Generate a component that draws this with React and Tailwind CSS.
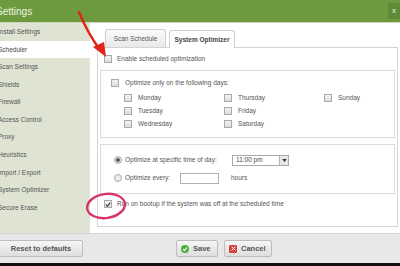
import React from "react";

const navItems = [
  "Install Settings",
  "Scheduler",
  "Scan Settings",
  "Shields",
  "Firewall",
  "Access Control",
  "Proxy",
  "Heuristics",
  "Import / Export",
  "System Optimizer",
  "Secure Erase",
];

function Box({ checked }) {
  return (
    <span className="w-[8px] h-[8px] shrink-0 border border-[#a9a9a9] bg-gradient-to-b from-[#f4f4f4] to-[#dcdcdc] flex items-center justify-center">
      {checked && (
        <svg viewBox="0 0 8 8" className="w-[7px] h-[7px]">
          <path d="M1.2 4.2 L3.2 6.2 L7 1.5" fill="none" stroke="#333" strokeWidth="1.4" />
        </svg>
      )}
    </span>
  );
}

function Radio({ on }) {
  return (
    <span className="w-[8px] h-[8px] shrink-0 rounded-full border border-[#a9a9a9] bg-[#ececec] flex items-center justify-center">
      {on && <span className="w-[4px] h-[4px] rounded-full bg-[#555]" />}
    </span>
  );
}

function Day({ label }) {
  return (
    <div className="h-[13px] flex items-center gap-[6px]">
      <Box />
      <span>{label}</span>
    </div>
  );
}

export default function App() {
  return (
    <div
      className="relative w-[400px] h-[266px] overflow-hidden bg-white text-[6.5px] text-[#555]"
      style={{ fontFamily: '"Liberation Sans", Arial, sans-serif' }}
    >
      {/* title bar */}
      <div className="h-[22px] bg-[#6d9a3f] flex items-center justify-between">
        <span className="ml-[-4px] text-[10px] text-[#eef4e4]">Settings</span>
        <span className="w-[12px] h-[16px] bg-[#5f8a36] text-[#eef4e4] text-[8px] flex items-center justify-center">
          x
        </span>
      </div>
      <div className="h-[1px] bg-[#cbd6bd]" />

      <div className="flex h-[210px]">
        {/* sidebar */}
        <div className="w-[90px] bg-[#dee3d2] flex flex-col">
          {navItems.map((item, i) => (
            <div
              key={item}
              className={
                "h-[17.6px] flex items-center pl-[-1px] " +
                (i === 1 ? "bg-white text-[#444]" : "text-[#555]")
              }
            >
              <span className="ml-[-2px]">{item}</span>
            </div>
          ))}
        </div>

        {/* content */}
        <div className="flex-1 pl-[7px] pr-[2px] flex flex-col">
          <div className="h-[24px] flex items-end pl-[8px] gap-[3px]">
            <div className="h-[18px] w-[61px] border border-b-0 border-[#cfcfcf] rounded-t-[3px] bg-gradient-to-b from-[#fafafa] to-[#e9e9e9] flex items-center justify-center">
              Scan Schedule
            </div>
            <div className="h-[18px] w-[66px] border border-b-0 border-[#cfcfcf] rounded-t-[3px] bg-white font-bold text-[#444] flex items-center justify-center mb-[-1px] relative">
              System Optimizer
            </div>
          </div>

          <div className="h-[180px] border border-[#d3d3d3] flex flex-col">
            <div className="h-[10px] mt-[6px] pl-[6px] flex items-center gap-[5px]">
              <Box />
              <span>Enable scheduled optimization</span>
            </div>

            <div className="mx-[2px] mt-[6px] h-[68px] border border-[#dadada] flex flex-col">
              <div className="h-[10px] mt-[7px] pl-[10px] flex items-center gap-[6px]">
                <Box />
                <span>Optimize only on the following days:</span>
              </div>
              <div className="grid grid-cols-[100px_100px_1fr] pl-[23px] mt-[3px]">
                <div className="flex flex-col">
                  <Day label="Monday" />
                  <Day label="Tuesday" />
                  <Day label="Wednesday" />
                </div>
                <div className="flex flex-col">
                  <Day label="Thursday" />
                  <Day label="Friday" />
                  <Day label="Saturday" />
                </div>
                <div className="flex flex-col">
                  <Day label="Sunday" />
                </div>
              </div>
            </div>

            <div className="mx-[2px] mt-[6px] h-[50px] border border-[#dadada] flex flex-col">
              <div className="h-[12px] mt-[9px] pl-[13px] flex items-center gap-[3px]">
                <Radio on />
                <span className="w-[104px]">Optimize at specific time of day:</span>
                <div className="w-[57px] h-[11px] border border-[#a9a9a9] bg-white flex items-center justify-between pl-[3px] text-[#444]">
                  <span>11:00 pm</span>
                  <span className="w-[9px] h-full border-l border-[#b5b5b5] bg-[#e6e6e6] flex items-center justify-center">
                    <svg viewBox="0 0 6 4" className="w-[5px] h-[3px]">
                      <path d="M0 0 L6 0 L3 4 Z" fill="#333" />
                    </svg>
                  </span>
                </div>
              </div>
              <div className="h-[12px] mt-[6px] pl-[13px] flex items-center gap-[3px]">
                <Radio />
                <span className="w-[52px]">Optimize every:</span>
                <div className="w-[39px] h-[11px] border border-[#b0b0b0] bg-white" />
                <span className="ml-[9px]">hours</span>
              </div>
            </div>

            <div className="h-[10px] mt-[5px] pl-[6px] flex items-center gap-[5px]">
              <Box checked />
              <span>Run on bootup if the system was off at the scheduled time</span>
            </div>
          </div>
        </div>
      </div>

      {/* bottom bar */}
      <div className="h-[30px] bg-[#e8e8e8] border-t border-[#d6d6d6] flex items-center">
        <div className="w-[84px] h-[17px] ml-[-1px] border border-[#bdbdbd] rounded-[2px] bg-gradient-to-b from-[#f6f6f6] to-[#dedede] flex items-center justify-center font-bold text-[7.5px] text-[#555]">
          Reset to defaults
        </div>
        <div className="ml-[93px] w-[42px] h-[17px] border border-[#bdbdbd] rounded-[2px] bg-gradient-to-b from-[#f6f6f6] to-[#dedede] flex items-center gap-[4px] pl-[4px] font-bold text-[7.5px] text-[#555]">
          <span className="w-[8px] h-[8px] rounded-full bg-[#4caf3c] flex items-center justify-center">
            <svg viewBox="0 0 8 8" className="w-[6px] h-[6px]">
              <path d="M1.5 4.2 L3.3 6 L6.7 2" fill="none" stroke="#fff" strokeWidth="1.5" />
            </svg>
          </span>
          Save
        </div>
        <div className="ml-[6px] w-[48px] h-[17px] border border-[#bdbdbd] rounded-[2px] bg-gradient-to-b from-[#f6f6f6] to-[#dedede] flex items-center gap-[4px] pl-[4px] font-bold text-[7.5px] text-[#555]">
          <span className="w-[8px] h-[8px] rounded-[1px] bg-[#d9423a] flex items-center justify-center">
            <svg viewBox="0 0 8 8" className="w-[5px] h-[5px]">
              <path d="M1 1 L7 7 M7 1 L1 7" stroke="#fff" strokeWidth="1.6" />
            </svg>
          </span>
          Cancel
        </div>
      </div>
      <div className="h-[4px] bg-[#111]" />

      {/* annotations */}
      <svg className="absolute inset-0 pointer-events-none" width="400" height="266" viewBox="0 0 400 266">
        <path d="M79 12 Q87 32 100 50" fill="none" stroke="#e0231b" strokeWidth="2.4" strokeLinecap="round" />
        <path d="M93 47 L106 57 L104 42 Z" fill="#e0231b" />
        <ellipse cx="106" cy="206" rx="19" ry="12" transform="rotate(-8 106 206)" fill="none" stroke="#d8336b" strokeWidth="2.4" />
      </svg>
    </div>
  );
}
